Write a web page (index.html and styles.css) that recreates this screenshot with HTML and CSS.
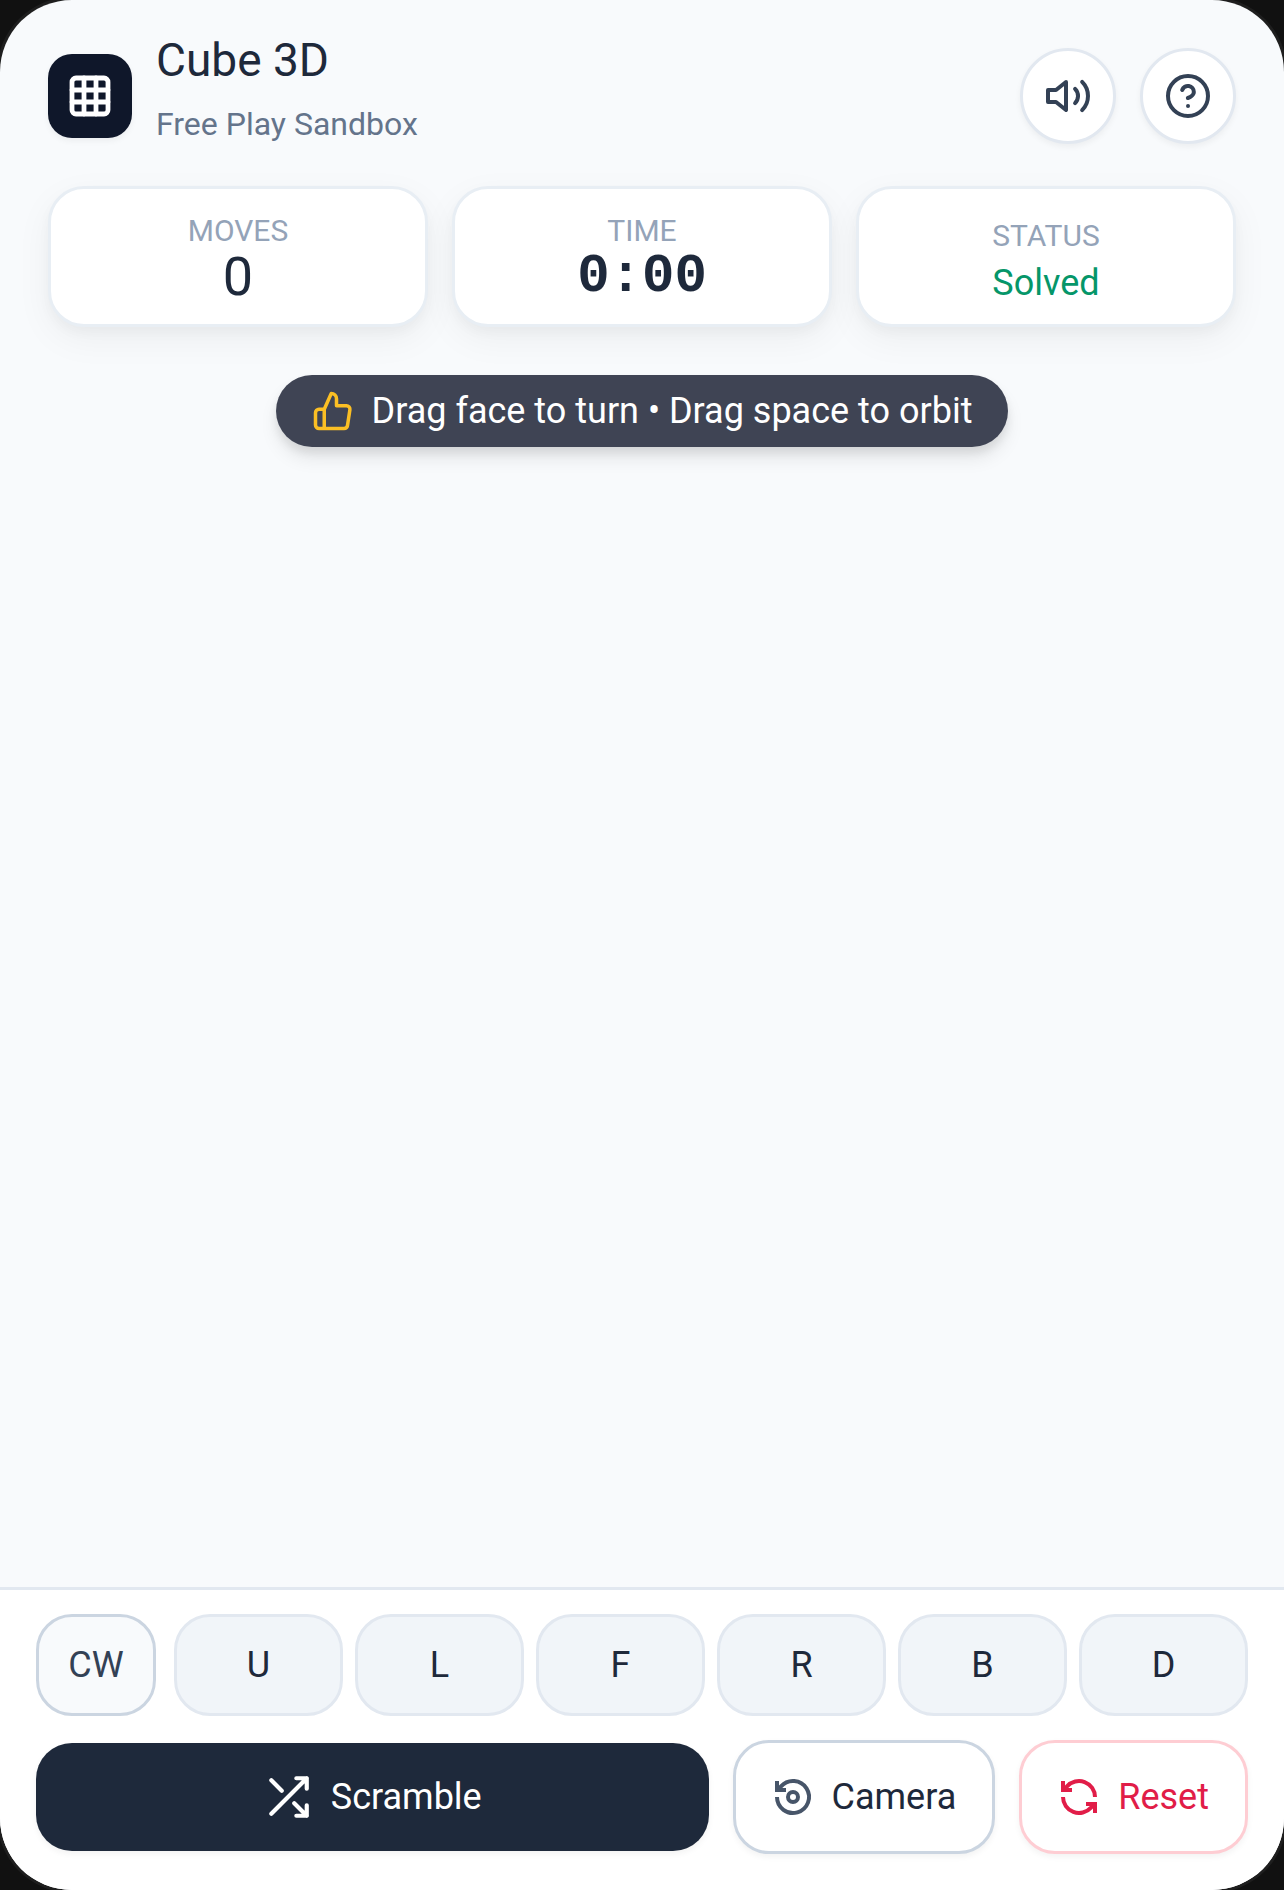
FILE: index.html
```html
<!DOCTYPE html>
<html lang="en">
<head>
    <meta charset="UTF-8">
    <meta name="viewport" content="width=device-width, initial-scale=1.0">
    <title>Cube 3D</title>
    <link rel="stylesheet" href="styles.css">
</head>
<body>

<div class="app">
    <header class="header">
        <div class="logo">
            <svg class="icon" viewBox="0 0 24 24" aria-hidden="true">
                <rect x="3" y="3" width="18" height="18" rx="2"></rect>
                <path d="M3 9h18M3 15h18M9 3v18M15 3v18"></path>
            </svg>
        </div>
        <div class="heading">
            <h1>Cube 3D</h1>
            <p>Free Play Sandbox</p>
        </div>
        <div class="header-actions">
            <button id="soundBtn" class="round-btn" aria-label="Sound">
                <svg class="icon" viewBox="0 0 24 24" aria-hidden="true">
                    <path d="M11 5L6 9H2v6h4l5 4z"></path>
                    <path d="M15.54 8.46a5 5 0 0 1 0 7.07M19.07 4.93a10 10 0 0 1 0 14.14"></path>
                </svg>
            </button>
            <button id="helpBtn" class="round-btn" aria-label="Help">
                <svg class="icon" viewBox="0 0 24 24" aria-hidden="true">
                    <circle cx="12" cy="12" r="10"></circle>
                    <path d="M9.09 9a3 3 0 0 1 5.83 1c0 2-3 3-3 3M12 17h.01"></path>
                </svg>
            </button>
        </div>
    </header>

    <div class="stats">
        <div class="stat">
            <span class="stat-label">MOVES</span>
            <span id="moves" class="stat-value">0</span>
        </div>
        <div class="stat">
            <span class="stat-label">TIME</span>
            <span id="time" class="stat-value mono">0:00</span>
        </div>
        <div class="stat">
            <span class="stat-label">STATUS</span>
            <span id="status" class="stat-status">Solved</span>
        </div>
    </div>

    <main class="stage">
        <div class="hint">
            <svg class="icon" viewBox="0 0 24 24" aria-hidden="true">
                <path d="M14 9V5a3 3 0 0 0-3-3l-4 9v11h11.28a2 2 0 0 0 2-1.700l1.380-9a2 2 0 0 0-2-2.300zM7 22H4a2 2 0 0 1-2-2v-7a2 2 0 0 1 2-2h3"></path>
            </svg>
            <span>Drag face to turn • Drag space to orbit</span>
        </div>
    </main>

    <footer class="controls">
        <div class="turns">
            <button id="dirBtn" class="turn-btn direction">CW</button>
            <div class="faces">
                <button class="turn-btn" data-face="U">U</button>
                <button class="turn-btn" data-face="L">L</button>
                <button class="turn-btn" data-face="F">F</button>
                <button class="turn-btn" data-face="R">R</button>
                <button class="turn-btn" data-face="B">B</button>
                <button class="turn-btn" data-face="D">D</button>
            </div>
        </div>
        <div class="actions">
            <button id="scrambleBtn" class="action-btn scramble">
                <svg class="icon" viewBox="0 0 24 24" aria-hidden="true">
                    <path d="M16 3h5v5M4 20L21 3M21 16v5h-5M15 15l6 6M4 4l5 5"></path>
                </svg>
                Scramble
            </button>
            <button id="cameraBtn" class="action-btn camera">
                <svg class="icon" viewBox="0 0 42 42" aria-hidden="true">
                    <path d="M5 21a16 16 0 1 0 4-10.600L6 14"></path>
                    <path d="M5 5v9h9"></path>
                    <circle cx="21" cy="21" r="5"></circle>
                </svg>
                Camera
            </button>
            <button id="resetBtn" class="action-btn reset">
                <svg class="icon" viewBox="0 0 42 42" aria-hidden="true">
                    <path d="M37 21A16 16 0 0 0 9 10.400L6 14M5 5v9h9"></path>
                    <path d="M5 21a16 16 0 0 0 28 10.600L36 28M37 37v-9h-9"></path>
                </svg>
                Reset
            </button>
        </div>
    </footer>
</div>

</body>
</html>
```

FILE: styles.css
```css
* {
    box-sizing: border-box;
}

body {
    margin: 0;
    background-color: #111;
    color: #1e293b;
    font-family: Roboto, 'Liberation Sans', sans-serif;
    font-size: 36px;
}

h1, p {
    margin: 0;
    font-weight: 400;
}

button {
    margin: 0;
    padding: 0;
    font: inherit;
    color: inherit;
    cursor: pointer;
}

.icon {
    flex: none;
    width: 48px;
    height: 48px;
    fill: none;
    stroke: currentColor;
    stroke-width: 2;
    stroke-linecap: round;
    stroke-linejoin: round;
}

.app {
    display: flex;
    flex-direction: column;
    min-height: 100vh;
    overflow: hidden;
    border-radius: 72px;
    background-color: #f8fafc;
    box-shadow: 0 0 0 3px #1e1e1e;
}

/* Header */
.header {
    display: flex;
    align-items: center;
    gap: 24px;
    padding: 34px 48px 28px;
}

.logo {
    display: flex;
    align-items: center;
    justify-content: center;
    width: 84px;
    height: 84px;
    border-radius: 24px;
    background-color: #0f172a;
    color: #fff;
    box-shadow: 0 3px 6px rgba(0, 0, 0, 0.05);
}

.logo .icon {
    stroke-width: 2.4;
}

.heading {
    flex: 1;
}

.heading h1 {
    font-size: 46px;
    line-height: 52px;
}

.heading p {
    margin-top: 4px;
    font-size: 32px;
    line-height: 68px;
    color: #64748b;
}

.header-actions {
    display: flex;
    gap: 24px;
}

.round-btn {
    display: flex;
    align-items: center;
    justify-content: center;
    width: 96px;
    height: 96px;
    border: 3px solid #e2e8f0;
    border-radius: 50%;
    background-color: #fff;
    color: #334155;
    box-shadow: 0 3px 6px rgba(0, 0, 0, 0.05);
}

/* Stats */
.stats {
    display: grid;
    grid-template-columns: repeat(3, 1fr);
    gap: 24px;
    padding: 0 48px;
}

.stat {
    display: flex;
    flex-direction: column;
    align-items: center;
    justify-content: center;
    padding: 21px;
    border: 3px solid #e8eef4;
    border-radius: 36px;
    background-color: #fff;
    box-shadow: 0 12px 36px rgba(0, 0, 0, 0.05), 0 6px 12px rgba(0, 0, 0, 0.03);
}

.stat-label {
    font-size: 30px;
    line-height: 41px;
    color: #94a3b8;
}

.stat-value {
    font-size: 54px;
    line-height: 52px;
}

.mono {
    font-family: 'Liberation Mono', monospace;
    font-weight: 700;
}

.stat-status {
    margin-top: 12px;
    line-height: 30px;
    color: #059669;
}

/* Cube area */
.stage {
    display: flex;
    flex: 1;
    align-items: flex-start;
    justify-content: center;
    padding-top: 48px;
}

.hint {
    display: flex;
    align-items: center;
    gap: 18px;
    padding: 15px 36px;
    border-radius: 36px;
    background-color: #3f4454;
    color: #fff;
    line-height: 42px;
    box-shadow: 0 12px 18px rgba(0, 0, 0, 0.08), 0 6px 9px rgba(0, 0, 0, 0.08);
}

.hint .icon {
    width: 42px;
    height: 42px;
    color: #fbbf24;
}

/* Controls */
.controls {
    display: flex;
    flex-direction: column;
    gap: 24px;
    padding: 24px 36px 36px;
    border-top: 3px solid #e2e8f0;
    background-color: #fff;
}

.turns {
    display: flex;
    gap: 18px;
}

.faces {
    display: grid;
    flex: 1;
    grid-template-columns: repeat(6, 1fr);
    gap: 12px;
}

.turn-btn {
    height: 102px;
    border: 3px solid #e2e8f0;
    border-radius: 36px;
    background-color: #f1f5f9;
}

.direction {
    width: 120px;
    border-color: #cbd5e1;
    background-color: #f8fafc;
    color: #334155;
}

.actions {
    display: flex;
    align-items: center;
    gap: 24px;
}

.action-btn {
    display: flex;
    align-items: center;
    justify-content: center;
    gap: 18px;
    height: 114px;
    padding: 0 36px;
    border: 3px solid #cbd5e1;
    border-radius: 36px;
    background-color: #fff;
    box-shadow: 0 3px 6px rgba(0, 0, 0, 0.05);
}

.scramble {
    flex: 1;
    height: 108px;
    border: none;
    background-color: #1e293b;
    color: #fff;
}

.scramble .icon {
    width: 50px;
    height: 50px;
}

.camera .icon,
.reset .icon {
    width: 42px;
    height: 42px;
    stroke-width: 4;
    stroke-linecap: butt;
    stroke-linejoin: miter;
}

.camera .icon {
    color: #475569;
}

.reset {
    border-color: #fecdd3;
    color: #e11d48;
}
```
